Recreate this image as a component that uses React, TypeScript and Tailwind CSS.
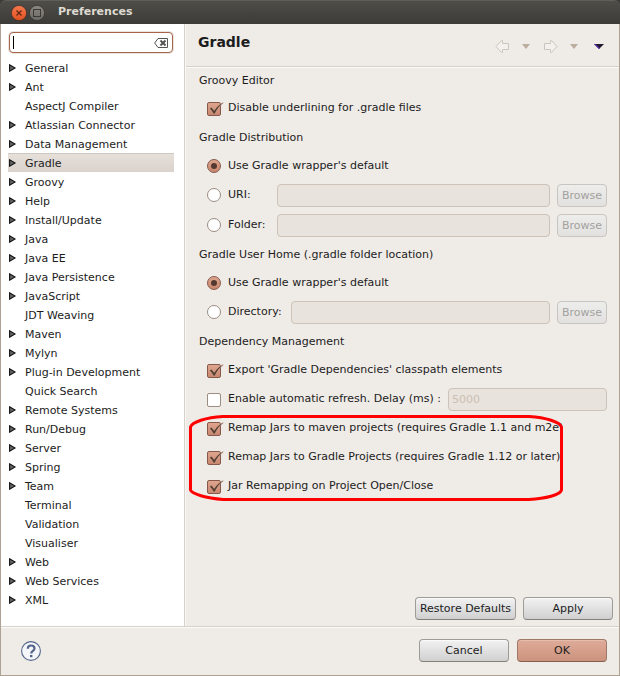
import React from "react";

const tree: { name: string; leaf?: boolean }[] = [
  { name: "General" },
  { name: "Ant" },
  { name: "AspectJ Compiler", leaf: true },
  { name: "Atlassian Connector" },
  { name: "Data Management" },
  { name: "Gradle" },
  { name: "Groovy" },
  { name: "Help" },
  { name: "Install/Update" },
  { name: "Java" },
  { name: "Java EE" },
  { name: "Java Persistence" },
  { name: "JavaScript" },
  { name: "JDT Weaving", leaf: true },
  { name: "Maven" },
  { name: "Mylyn" },
  { name: "Plug-in Development" },
  { name: "Quick Search", leaf: true },
  { name: "Remote Systems" },
  { name: "Run/Debug" },
  { name: "Server" },
  { name: "Spring" },
  { name: "Team" },
  { name: "Terminal", leaf: true },
  { name: "Validation", leaf: true },
  { name: "Visualiser", leaf: true },
  { name: "Web" },
  { name: "Web Services" },
  { name: "XML" },
];

function TitleBar() {
  return (
    <header className="flex h-6 items-center rounded-t-md border-t border-[#5f5e59] bg-linear-to-b from-[#4e4d48] to-[#3c3b37] pl-[11px]">
      <button type="button" aria-label="Close" className="mr-0.5 block size-4">
        <svg viewBox="0 0 16 16" className="block size-4">
          <defs>
            <linearGradient id="close" x1="0" y1="0" x2="0" y2="1">
              <stop offset="0" stopColor="#f4794f" />
              <stop offset="1" stopColor="#e0501f" />
            </linearGradient>
          </defs>
          <circle cx="8" cy="8" r="7.6" fill="url(#close)" stroke="#3b2f29" strokeWidth=".7" />
          <path d="M5.500 5.500l5 5M10.500 5.500l-5 5" stroke="#5d2814" strokeWidth="1.200" />
        </svg>
      </button>
      <button type="button" aria-label="Maximize" className="block size-4">
        <svg viewBox="0 0 16 16" className="block size-4">
          <defs>
            <linearGradient id="max" x1="0" y1="0" x2="0" y2="1">
              <stop offset="0" stopColor="#8a8881" />
              <stop offset="1" stopColor="#6b6963" />
            </linearGradient>
          </defs>
          <circle cx="8" cy="8" r="7.6" fill="url(#max)" stroke="#33322e" strokeWidth=".7" />
          <rect x="4.500" y="4.500" width="7" height="7" fill="none" stroke="#3a3935" />
        </svg>
      </button>
      <h1 className="ml-[13px] pb-0.5 font-bold text-[#dfdbd2]">Preferences</h1>
    </header>
  );
}

function SearchBox() {
  return (
    <div className="mr-[11px] ml-2 flex h-[21px] items-center rounded-sm border border-[#a5644c] bg-white pr-1 pl-[3px] ring-1 ring-[#ece4df]">
      <span className="h-[13px] w-px bg-black" />
      <input type="text" aria-label="Filter" className="h-4 min-w-0 flex-1 bg-transparent outline-none" />
      <button type="button" aria-label="Clear">
        <svg viewBox="0 0 14 10" className="block h-2.5 w-3.5">
          <path d="M4 .5h9.500v9H4L.7 5z" fill="#fff" stroke="#555" />
          <path d="M6.500 2.500l5 5M11.500 2.500l-5 5" stroke="#555" strokeWidth="2" />
        </svg>
      </button>
    </div>
  );
}

function Tree() {
  return (
    <ul className="mt-[5px] mr-2.5 ml-[7px]">
      {tree.map((item) => (
        <li
          key={item.name}
          className={
            item.name === "Gradle"
              ? "flex h-[19px] items-center border-t border-[#cfc8c1] bg-linear-to-b from-[#e6e0db] to-[#dad2cb]"
              : "flex h-[19px] items-center border-t border-transparent"
          }
        >
          <svg viewBox="0 0 8 8" className="mr-2 ml-px h-2 w-2">
            {!item.leaf && <path d="M.6 .8v6.400L6 4z" fill="#666" stroke="#111" strokeWidth="1.100" />}
          </svg>
          <span className="pt-px">{item.name}</span>
        </li>
      ))}
    </ul>
  );
}

function Check({ id, on, children }: { id: string; on?: boolean; children: React.ReactNode }) {
  return (
    <div className="flex h-[29px] items-center">
      <span className="relative mr-[7px] block size-3.5">
        <input
          id={id}
          type="checkbox"
          defaultChecked={on}
          className="peer block size-3.5 appearance-none rounded-xs border border-[#9a8d82] bg-white checked:border-[#84584a] checked:bg-linear-to-b checked:from-[#dfa58f] checked:to-[#c9866e]"
        />
        <svg viewBox="0 0 17 14" className="pointer-events-none absolute top-0 left-0 hidden h-3.5 w-[17px] peer-checked:block">
          <path
            d="M2.500 6.500l2-1.300 2.700 3.200C9.500 4.800 12.500 2.200 16 .5l.3 .6C12.500 4 9.800 7.500 7.900 12H6.500C5.500 9.800 4.200 8.100 2.500 6.500z"
            fill="#55402f"
            stroke="#e6b9a8"
            strokeWidth=".4"
          />
        </svg>
      </span>
      <label htmlFor={id} className="pb-px">{children}</label>
    </div>
  );
}

function Radio({ id, name, on, children }: { id: string; name: string; on?: boolean; children: React.ReactNode }) {
  return (
    <>
      <span className="relative mr-[7px] block size-3.5 shrink-0">
        <input
          id={id}
          name={name}
          type="radio"
          defaultChecked={on}
          className="peer block size-3.5 appearance-none rounded-full border border-[#9a8d82] bg-white checked:border-[#84584a] checked:bg-linear-to-b checked:from-[#dfa58f] checked:to-[#c9866e]"
        />
        <span className="pointer-events-none absolute top-1 left-1 hidden size-1.5 rounded-full bg-[#53392f] peer-checked:block" />
      </span>
      <label htmlFor={id}>{children}</label>
    </>
  );
}

function PathRow({ id, name, label }: { id: string; name: string; label: string }) {
  return (
    <div className="flex h-[29px] items-center">
      <div className={label === "Directory:" ? "flex w-[84px] items-center pb-px" : "flex w-[70px] items-center pb-px"}>
        <Radio id={id} name={name}>{label}</Radio>
      </div>
      <input
        type="text"
        disabled
        aria-label={label}
        className="h-[23px] min-w-0 flex-1 rounded-sm border border-[#cdc3b8] bg-[#e8e3dd] px-1"
      />
      <button
        type="button"
        disabled
        className="ml-[7px] h-[23px] w-[50px] rounded-sm border border-[#c9c5c0] bg-linear-to-b from-[#ededec] to-[#e2e1df] text-[#a3a19e]"
      >
        Browse
      </button>
    </div>
  );
}

function SectionLabel({ children }: { children: React.ReactNode }) {
  return <h3 className="flex h-[29px] items-center">{children}</h3>;
}

const button =
  "h-[23px] rounded-sm border border-[#9f9c98] border-b-[#83807c] bg-linear-to-b from-[#f2f2f2] to-[#d0d0d0] shadow-[inset_0_1px_0_#fafafa]";

function HistoryArrow({ forward }: { forward?: boolean }) {
  return (
    <svg viewBox="0 0 15 13" className="h-[13px] w-[15px]">
      <path
        d={forward ? "M1.500 3.500h6v-3h1l5.500 6-5.500 6h-1v-3h-6z" : "M13.500 3.500h-6v-3h-1l-5.500 6 5.500 6h1v-3h6z"}
        fill="#f3f1ed"
        stroke="#c9c6be"
        strokeLinejoin="round"
      />
    </svg>
  );
}

function Caret({ dark }: { dark?: boolean }) {
  return dark ? (
    <svg viewBox="0 0 10 5" className="h-[5px] w-2.5">
      <path d="M0 0h10L5 5z" fill="#20182c" />
      <path d="M0 0h1.500L6 4.300 5 5z" fill="#5a2ab0" />
    </svg>
  ) : (
    <svg viewBox="0 0 8 5" className="h-[5px] w-2">
      <path d="M0 0h8L4 5z" fill="#bcae9f" />
    </svg>
  );
}

function PageHeader() {
  return (
    <div className="flex h-[43px] items-center justify-between border-b border-[#d6d1c9] pr-[15px] pl-3 shadow-[0_1px_0_#fbfaf8]">
      <h2 className="pb-[7px] text-sm font-bold">Gradle</h2>
      <div className="flex items-center pt-0.5">
        <button type="button" aria-label="Back" disabled><HistoryArrow /></button>
        <button type="button" aria-label="Back history" disabled className="ml-3"><Caret /></button>
        <button type="button" aria-label="Forward" disabled className="ml-[13px]"><HistoryArrow forward /></button>
        <button type="button" aria-label="Forward history" disabled className="ml-3"><Caret /></button>
        <button type="button" aria-label="View menu" className="ml-4"><Caret dark /></button>
      </div>
    </div>
  );
}

export default function App() {
  return (
    <div className="bg-[#3c3b37] font-['DejaVu_Sans',sans-serif] text-[11px] leading-[14px] text-[#1c1c1c]">
      <div className="flex min-h-screen flex-col">
        <TitleBar />
        <main className="flex flex-1 flex-col border-x border-b border-[#aea295] bg-[#efebe7]">
          <div className="flex flex-1">
            <nav className="w-[184px] shrink-0 border-r border-[#d6d1c9] bg-white pt-2">
              <SearchBox />
              <Tree />
            </nav>
            <section className="flex min-w-0 flex-1 flex-col border-l border-[#f8f6f4]">
              <PageHeader />
              <form className="pr-3 pl-[13px]">
                <h3 className="flex h-[27px] items-center pt-px">Groovy Editor</h3>
                <div className="pl-2">
                  <Check id="underline" on>Disable underlining for .gradle files</Check>
                </div>
                <SectionLabel>Gradle Distribution</SectionLabel>
                <div className="pl-2">
                  <div className="flex h-[29px] items-center pb-px">
                    <Radio id="dist-default" name="dist" on>Use Gradle wrapper's default</Radio>
                  </div>
                  <div className="flex flex-col gap-px">
                    <PathRow id="uri" name="dist" label="URI:" />
                    <PathRow id="folder" name="dist" label="Folder:" />
                  </div>
                </div>
                <SectionLabel>Gradle User Home (.gradle folder location)</SectionLabel>
                <div className="pl-2">
                  <div className="flex h-[29px] items-center pb-px">
                    <Radio id="home-default" name="home" on>Use Gradle wrapper's default</Radio>
                  </div>
                  <PathRow id="directory" name="home" label="Directory:" />
                </div>
                <SectionLabel>Dependency Management</SectionLabel>
                <div className="pl-2">
                  <Check id="export" on>Export 'Gradle Dependencies' classpath elements</Check>
                  <div className="flex items-center">
                    <div className="w-[241px]">
                      <Check id="refresh">Enable automatic refresh. Delay (ms) :</Check>
                    </div>
                    <input
                      type="text"
                      disabled
                      aria-label="Delay (ms)"
                      defaultValue="5000"
                      className="h-[23px] min-w-0 flex-1 rounded-sm border border-[#cdc3b8] bg-[#e8e3dd] px-[3px] pb-px text-[#cdbfb3]"
                    />
                  </div>
                  <div className="relative w-fit">
                    <Check id="remap-maven" on>Remap Jars to maven projects (requires Gradle 1.1 and m2e)</Check>
                    <Check id="remap-gradle" on>Remap Jars to Gradle Projects (requires Gradle 1.12 or later)</Check>
                    <Check id="remap-open" on>Jar Remapping on Project Open/Close</Check>
                    <svg viewBox="0 0 375 88" className="pointer-events-none absolute top-0 -left-[18px] h-[88px] w-[375px]">
                      <path
                        d="M34 2.500H340C357 3.500 371 8 372.500 13V76C371 81 357 84.500 340 85.500H34C17 84 3 80 1.500 76V13C3 8 17 3.500 34 2.500z"
                        fill="none"
                        stroke="#f00"
                        strokeWidth="3"
                      />
                    </svg>
                  </div>
                </div>
              </form>
              <div className="mt-auto flex justify-end gap-[7px] pr-1.5 pb-1.5">
                <button type="button" className={`${button} w-[101px]`}>Restore Defaults</button>
                <button type="button" className={`${button} w-[90px]`}>Apply</button>
              </div>
            </section>
          </div>
          <footer className="flex h-[49px] items-center justify-between border-t border-[#d6d1c9] pr-3 pb-px pl-5 shadow-[inset_0_1px_0_#fbfaf8]">
            <button type="button" aria-label="Help">
              <svg viewBox="0 0 20 20" className="block size-5">
                <circle cx="10" cy="10" r="9.400" fill="#f4f6fa" stroke="#53658a" strokeWidth="1.100" />
                <path d="M6.800 7.800c0-2 1.300-3.300 3.300-3.300s3.400 1.200 3.400 2.900c0 2.600-3.300 2.500-3.300 5.100" fill="none" stroke="#53658a" strokeWidth="2.200" />
                <rect x="9" y="14" width="2.400" height="2.200" fill="#53658a" />
              </svg>
            </button>
            <div className="flex gap-2">
              <button type="button" className={`${button} w-[90px]`}>Cancel</button>
              <button
                type="button"
                className="h-[23px] w-[90px] rounded-sm border border-[#a07867] border-b-[#86604f] bg-linear-to-b from-[#dfab99] to-[#cb937d] shadow-[inset_0_1px_0_#e6bcad]"
              >
                OK
              </button>
            </div>
          </footer>
        </main>
      </div>
    </div>
  );
}
